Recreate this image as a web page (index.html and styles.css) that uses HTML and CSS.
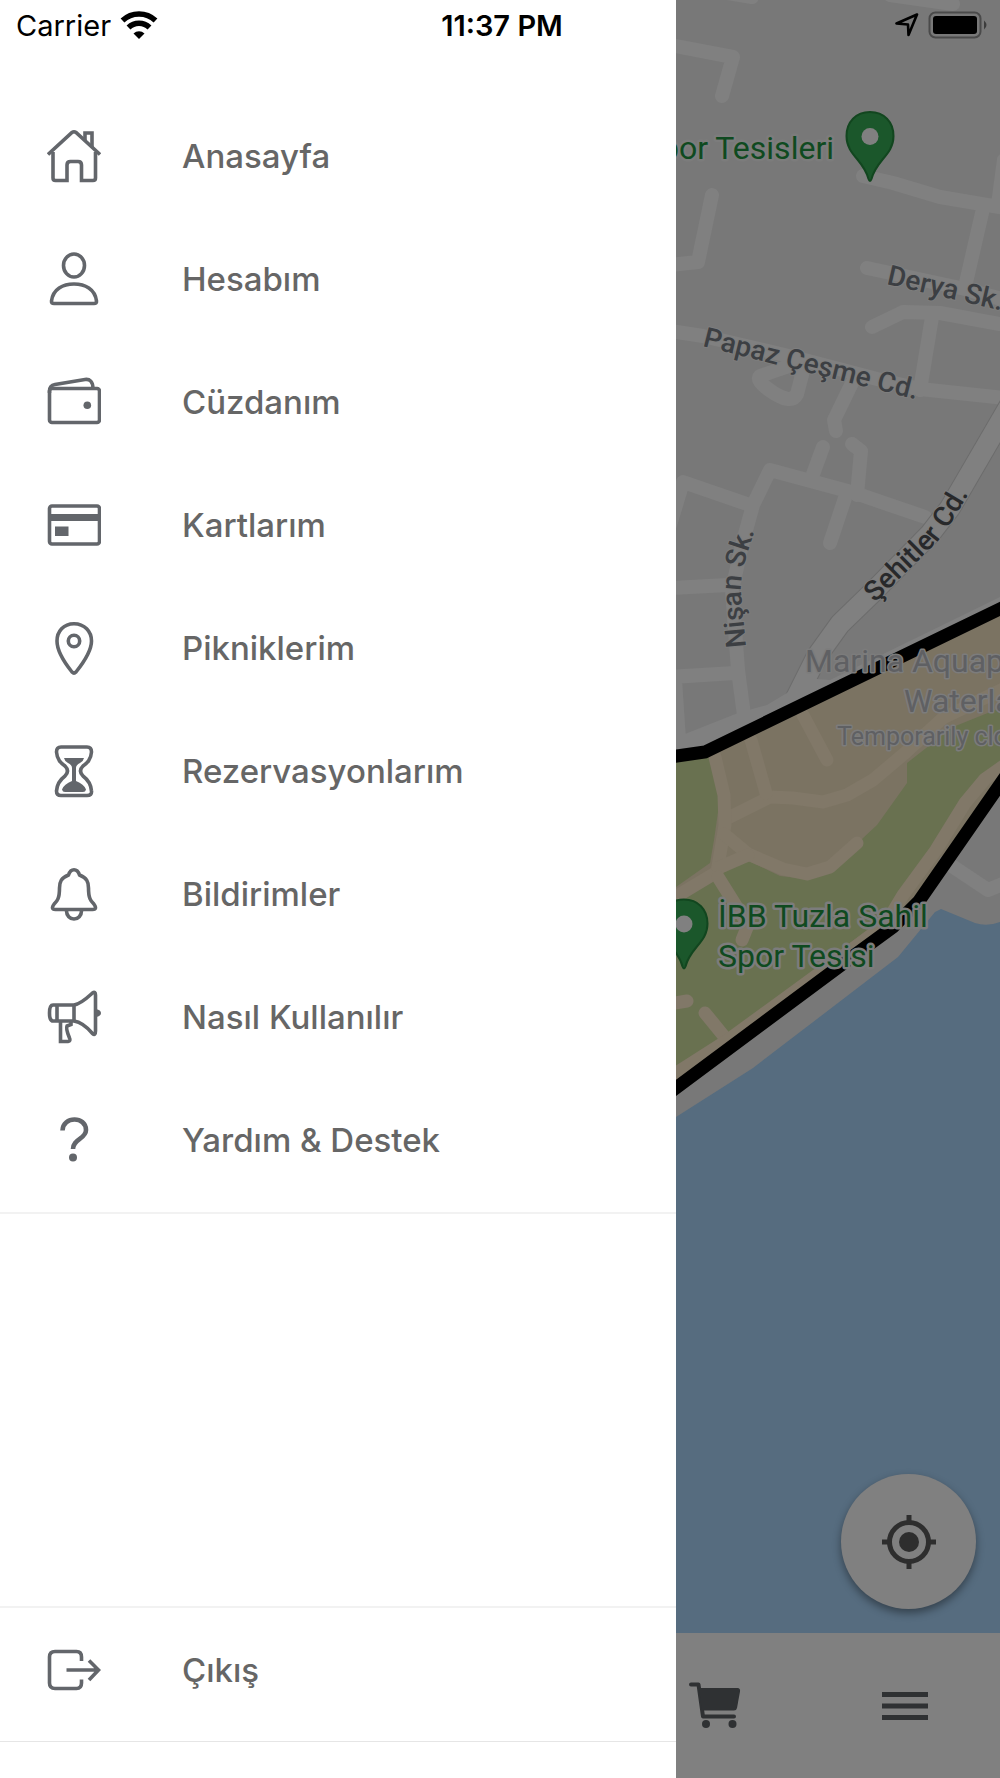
FILE: index.html
```
<!DOCTYPE html>
<html lang="tr">
<head>
    <meta charset="UTF-8">
    <meta name="viewport" content="width=device-width, initial-scale=1.0">
    <title>Menü</title>
    <link rel="stylesheet" href="styles.css">
</head>
<body>
    <div class="app">
        <header class="status-bar">
            <div class="status-left">
                <span>Carrier</span>
                <svg class="wifi" viewBox="0 0 38 28">
                    <path d="M2.5 9.5 A24 24 0 0 1 35.5 9.5" fill="none" stroke="#000" stroke-width="5.5"/>
                    <path d="M8.5 16.5 A15 15 0 0 1 29.5 16.5" fill="none" stroke="#000" stroke-width="5.5"/>
                    <path d="M19 28 L13.5 22.5 A8 8 0 0 1 24.5 22.5Z"/>
                </svg>
            </div>
            <div class="status-time">11:37 PM</div>
            <div class="status-right">
                <svg class="location" viewBox="0 0 24 24">
                    <path d="M22 1.5 L1.5 10.5 L13 11.5 L13.5 22Z" fill="none" stroke="#000" stroke-width="2.6" stroke-linejoin="round"/>
                </svg>
                <svg class="battery" viewBox="0 0 60 28">
                    <rect x="1.5" y="1.5" width="51" height="25" rx="6" fill="none" stroke="#4a4a4a" stroke-width="2"/>
                    <rect x="5" y="5" width="44" height="18" rx="3"/>
                    <path d="M56 9.5 Q61 14 56 18.5Z" fill="#3c3c3c"/>
                </svg>
            </div>
        </header>

        <aside class="drawer">
            <nav class="menu">
                <a class="menu-item" href="#">
                    <svg class="icon" viewBox="0 0 54 54">
                        <path d="M1 25.5 L25 3.5 Q27 2 29 3.5 L53 25.5"/>
                        <path d="M38 11 V4 H45 V18"/>
                        <path d="M6 23 V49 Q6 51.5 8.5 51.5 H20 V36 Q20 32.5 23.5 32.5 H31 Q34.5 32.5 34.5 36 V51.5 H46 Q48.5 51.5 48.5 49 V23"/>
                    </svg>
                    <span>Anasayfa</span>
                </a>
                <a class="menu-item" href="#">
                    <svg class="icon" viewBox="0 0 54 54">
                        <ellipse cx="27" cy="13.5" rx="10.5" ry="11.5"/>
                        <path d="M4.5 49 C6 37 16 32 27 32 S48 37 49.5 49 Q49.8 51.5 47 51.5 H7 Q4.2 51.5 4.5 49Z"/>
                    </svg>
                    <span>Hesabım</span>
                </a>
                <a class="menu-item" href="#">
                    <svg class="icon" viewBox="0 0 54 54">
                        <rect x="2.5" y="13.5" width="50" height="34" rx="2.5"/>
                        <path d="M2.5 18 V16 Q2.5 10.5 8 9.5 L38 4.5 Q45.5 3.5 46 13"/>
                        <circle class="solid" cx="40.3" cy="30.3" r="3.8"/>
                    </svg>
                    <span>Cüzdanım</span>
                </a>
                <a class="menu-item" href="#">
                    <svg class="icon" viewBox="0 0 54 54">
                        <rect x="2.5" y="8" width="50" height="38" rx="2.5"/>
                        <rect class="solid" x="2.5" y="16" width="50" height="7"/>
                        <rect class="solid" x="8" y="28.5" width="13.5" height="9.5"/>
                    </svg>
                    <span>Kartlarım</span>
                </a>
                <a class="menu-item" href="#">
                    <svg class="icon" viewBox="0 0 54 54">
                        <path d="M27 2.7 C16.5 2.7 10 10.5 10 20 C10 30 19 43.5 25 51 Q27 53 29 51 C35 43.5 44.5 30 44.5 20 C44.5 10.5 37.5 2.7 27 2.7Z"/>
                        <circle cx="27" cy="20" r="5.7"/>
                    </svg>
                    <span>Pikniklerim</span>
                </a>
                <a class="menu-item" href="#">
                    <svg class="icon" viewBox="0 0 54 54">
                        <path d="M14 3 H40 Q44.5 3 44.5 8 C44 16 40 19 36 22 Q31 27 36 32 C40 35 44 40 44.5 47 Q45 51.5 40 51.5 H14 Q9.5 51.5 9.5 47 C10 40 14 35 18 32 Q23 27 18 22 C14 19 10 16 9.5 8 Q9.5 3 14 3Z"/>
                        <path class="solid" d="M17 14 H37 Q36.5 17 33 19 Q29 21 29 24 V37 Q37 40 39 45.5 Q38.5 48 36 48 H18 Q15.5 48 15 45.5 Q17 40 25 37 V24 Q25 21 21 19 Q17.5 17 17 14Z"/>
                    </svg>
                    <span>Rezervasyonlarım</span>
                </a>
                <a class="menu-item" href="#">
                    <svg class="icon" viewBox="0 0 54 54">
                        <path d="M27 2.8 C23.5 2.8 22.5 5 21.5 8 C14 11 12.5 15 12.5 21 C12.5 32 10 34 7.5 36.5 Q3 42.5 8.5 42.5 H45.5 Q51 42.5 46.5 36.5 C44 34 41.5 32 41.5 21 C41.5 15 40 11 32.5 8 C31.5 5 30.5 2.8 27 2.8Z"/>
                        <path d="M19.5 44 A7.5 8 0 0 0 34.5 44"/>
                    </svg>
                    <span>Bildirimler</span>
                </a>
                <a class="menu-item" href="#">
                    <svg class="icon" viewBox="0 0 54 54">
                        <path d="M27 15 C34 14 40 8 45.5 3 Q48.5 1 48.5 5 V41 Q48.5 46 45.5 43.5 C40 37 34 32 27 31"/>
                        <path d="M27 15 V31 H6 Q2.5 31 2.5 23 Q2.5 15 6 15Z M10 15 V31"/>
                        <path d="M13.5 31 V51.5 H21 Q24 51 22.5 48 C20 42 19 38 20 36 L24 34.5 V31"/>
                        <path class="solid" d="M49 19 Q54 20 54 23 Q54 26 49 27Z"/>
                    </svg>
                    <span>Nasıl Kullanılır</span>
                </a>
                <a class="menu-item" href="#">
                    <svg class="icon" viewBox="0 0 54 54">
                        <path class="thick" d="M15.5 17.5 C16 3 39 3 39 17 C39 26 26 26 26 36"/>
                        <circle class="solid" cx="26" cy="44.5" r="4"/>
                    </svg>
                    <span>Yardım &amp; Destek</span>
                </a>
            </nav>
            <div class="drawer-footer">
                <a class="menu-item" href="#">
                    <svg class="icon" viewBox="0 0 54 54">
                        <path d="M34.5 18 V14 Q34.5 8.5 29.5 8.5 H8 Q2.5 8.5 2.5 14 V40 Q2.5 45.5 8 45.5 H29.5 Q34.5 45.5 34.5 40 V36.5"/>
                        <path d="M19.5 27 H51 M42 17.5 L51.5 27 L42 37"/>
                    </svg>
                    <span>Çıkış</span>
                </a>
            </div>
        </aside>

        <main class="screen">
            <div class="map">
                <svg class="map-canvas" viewBox="676 0 324 1633" preserveAspectRatio="xMinYMin slice">
                    <defs>
                        <path id="nisan" d="M746 647 L741 592 Q740 568 759 520"/>
                        <path id="sehitler" d="M875 603 L938 541 Q955 520 984 466"/>
                    </defs>

                    <!-- streets -->
                    <g class="road">
                        <path d="M715 -9 L752 -3 M890 -5 L953 4"/>
                        <path d="M670 45 L733 57 L722 96"/>
                        <path d="M712 195 L698 262 L670 265"/>
                        <path d="M863 176 L893 183 L940 197 L1005 208"/>
                        <path d="M1004 160 L998 205 M982 213 L965 287"/>
                        <path d="M867 268 L965 289 L1005 300"/>
                        <path d="M872 327 L903 312 L940 313 L1000 324"/>
                        <path d="M932 317 L920 390"/>
                        <path d="M670 331 L703 336 L793 357 L877 379 L920 389 L1005 398"/>
                        <path d="M795 366 L802 375 L797 394 Q791 406 768 389 Q756 380 760 376 L795 364"/>
                        <path d="M852 383 L834 420 L836 431"/>
                        <path d="M852 444 L861 451 L857 495"/>
                        <path d="M823 447 L812 477"/>
                        <path d="M925 517 L855 493 L770 470 L753 505 L742 545 L732 590 L738 670 L744 715"/>
                        <path d="M845 498 L830 543"/>
                        <path d="M750 505 L683 482 L670 525"/>
                        <path d="M670 588 L728 585 M670 677 L735 673 M675 680 L679 740"/>
                    </g>
                    <path class="avenue-edge" d="M1010 405 L950 508 L930 534 L873 592 L840 624 L817 656 L794 702"/>
                    <path class="avenue" d="M1010 405 L950 508 L930 534 L873 592 L840 624 L817 656 L790 710"/>
                    <path class="verge" d="M676 760 V738 L685 734 L738 713 L767 705 L787 693 L803 678 L830 680 L1000 597 V615Z"/>

                    <!-- seaside park -->
                    <path class="sand" d="M676 756 L705 752 L1000 609 V783 L917 903 L893 927 L676 1088Z"/>
                    <path class="grass" d="M676 762 L710 757 L715 767 L719 805 L714 840 L710 863 L676 887Z"/>
                    <path class="grass" d="M1000 708 L953 727 L907 763 L907 783 L877 825 L863 838 L833 872 L807 879 L780 876 L747 860 L725 872 L710 875 L676 897 V1068 L725 1036 L890 913 L913 880 L960 805 L980 776 L1000 762Z"/>
                    <g class="path">
                        <path d="M1005 688 L943 718 L905 753 L873 780 L847 795 L823 802 L793 798 L770 797 L728 818"/>
                        <path d="M715 757 L724 795 L725 825 L717 872 L672 899"/>
                        <path d="M724 834 L748 854 L783 869 L807 874 L830 867 L857 843"/>
                        <path d="M718 868 L748 855"/>
                        <path d="M718 877 L748 925 L742 940"/>
                        <path d="M751 740 L766 793 M803 715 L827 760"/>
                        <path d="M670 1004 L687 1001 M705 1013 L727 1040"/>
                        <path d="M670 1077 L728 1040 L835 962 L885 925 L903 895 L936 850 L965 803 L985 779 L1005 765"/>
                    </g>

                    <!-- shore and sea -->
                    <path class="pier" d="M946 862 L988 890 L1005 883"/>
                    <path class="sea" d="M676 1117 L753 1068 L898 957 L921 929 L935 912 L941 909 L975 923 Q987 927 1000 922 V1633 H676Z"/>
                    <path class="border" d="M670 757 L705 752 L1010 604"/>
                    <path class="border" d="M665 1096 L852 957 L893 927 L919 901 L1010 770"/>

                    <g class="street-name">
                        <text transform="translate(886 284) rotate(13)">Derya Sk.</text>
                        <text transform="translate(702 346) rotate(14)">Papaz Çeşme Cd.</text>
                        <text><textPath href="#nisan">Nişan Sk.</textPath></text>
                        <text class="major"><textPath href="#sehitler">Şehitler Cd.</textPath></text>
                    </g>

                    <g class="place closed">
                        <text x="805" y="672">Marina Aquapark</text>
                        <text x="904" y="712">Waterland</text>
                        <text class="note" x="837" y="745">Temporarily closed</text>
                    </g>
                    <g class="place">
                        <text x="834" y="159" text-anchor="end">Spor Tesisleri</text>
                        <text x="718" y="927">İBB Tuzla Sahil</text>
                        <text x="718" y="967">Spor Tesisi</text>
                    </g>

                    <g class="pin">
                        <path d="M870 112 C856 112 846.5 122 846.5 136 C846.5 155 864 160 868.5 179 Q870 183 871.5 179 C876 160 893.5 155 893.5 136 C893.5 122 884 112 870 112Z"/>
                        <circle cx="870" cy="136.5" r="8.5"/>
                    </g>
                    <g class="pin">
                        <path d="M684 899.5 C670 899.5 660.5 909.5 660.5 923.5 C660.5 942.5 678 947.5 682.5 966.5 Q684 970.5 685.5 966.5 C690 947.5 707.5 942.5 707.5 923.5 C707.5 909.5 698 899.5 684 899.5Z"/>
                        <circle cx="684" cy="924" r="8.5"/>
                    </g>
                </svg>

                <button class="locate" type="button" aria-label="Konumum">
                    <svg viewBox="0 0 54 54">
                        <path d="M27 0 V7 M27 47 V54 M0 27 H7 M47 27 H54" stroke="#2e2e2e" stroke-width="5"/>
                        <circle cx="27" cy="27" r="19.5" fill="none" stroke="#2e2e2e" stroke-width="5"/>
                        <circle cx="27" cy="27" r="10" fill="#2e2e2e"/>
                    </svg>
                </button>
            </div>

            <nav class="tab-bar">
                <button class="tab" type="button" aria-label="Sepet">
                    <svg class="cart" viewBox="0 0 52 48">
                        <path d="M2 2.5 H9.5 L14 34.5 H45" fill="none" stroke="#2f3133" stroke-width="4" stroke-linecap="round" stroke-linejoin="round"/>
                        <path d="M10 6 H48.5 Q51.5 6 51 9.5 L48 26 Q47.5 28.5 45 28.5 H13Z" fill="#2f3133"/>
                        <circle cx="17" cy="42" r="4" fill="#2f3133"/>
                        <circle cx="43.5" cy="42" r="4" fill="#2f3133"/>
                    </svg>
                </button>
                <button class="tab" type="button" aria-label="Menü">
                    <svg class="burger" viewBox="0 0 46 28">
                        <path d="M0 2.5 H46 M0 14 H46 M0 25.5 H46" stroke="#2f3133" stroke-width="5"/>
                    </svg>
                </button>
            </nav>
        </main>
    </div>
</body>
</html>
```
FILE: styles.css
```
* {
    box-sizing: border-box;
}
body {
    margin: 0;
    font-family: Inter, "Liberation Sans", sans-serif;
    background: #fff;
}
.app {
    position: relative;
    display: flex;
    min-height: 100vh;
    overflow: hidden;
}

/* status bar lies over the drawer and the map */
.status-bar {
    position: absolute;
    top: 0;
    left: 0;
    right: 0;
    z-index: 2;
    display: grid;
    grid-template-columns: 1fr auto 1fr;
    align-items: center;
    height: 50px;
    padding: 0 12px 0 16px;
    font-size: 29px;
    color: #000;
}
.status-left,
.status-right {
    display: flex;
    align-items: center;
    gap: 9px;
}
.status-right {
    justify-content: flex-end;
}
.status-time {
    font-weight: 600;
}
.wifi {
    width: 38px;
    height: 28px;
}
.location {
    width: 24px;
    height: 24px;
}
.battery {
    width: 60px;
    height: 28px;
}

/* drawer */
.drawer {
    display: flex;
    flex-direction: column;
    justify-content: space-between;
    width: 67.6%;
    padding: 94px 0 36px;
    background: #fff;
}
.menu {
    padding-bottom: 11px;
    border-bottom: 2px solid #f2f2f2;
}
.menu-item {
    display: flex;
    align-items: center;
    gap: 81px;
    height: 123px;
    padding-left: 47px;
    font-size: 33px;
    font-weight: 500;
    color: #666;
    text-decoration: none;
}
.drawer-footer {
    padding-bottom: 10px;
    border-top: 2px solid #f2f2f2;
    border-bottom: 1px solid #e6e6e6;
}
.icon {
    width: 54px;
    height: 54px;
    fill: none;
    stroke: #63666b;
    stroke-width: 3.6;
}
.icon .solid {
    fill: #63666b;
    stroke: none;
}
.icon .thick {
    stroke-width: 4.6;
}

/* dimmed screen behind the drawer */
.screen {
    display: flex;
    flex: 1;
    flex-direction: column;
    min-width: 0;
    background: #808080;
}
.map {
    position: relative;
    display: flex;
    flex: 1;
    background: #787878;
}
.map-canvas {
    flex: 1;
    width: 100%;
}
.road,
.path,
.pier {
    fill: none;
    stroke: #808080;
    stroke-width: 14;
    stroke-linecap: round;
    stroke-linejoin: round;
}
.path {
    stroke: #817868;
    stroke-width: 13;
}
.avenue,
.avenue-edge {
    fill: none;
    stroke: #808080;
    stroke-width: 20;
    stroke-linejoin: round;
}
.avenue-edge {
    stroke: #6c6c6c;
    stroke-width: 22;
}
.verge {
    fill: #808080;
}
.sand {
    fill: #7b7362;
}
.grass {
    fill: #697150;
}
.sea {
    fill: #566c7f;
}
.border {
    fill: none;
    stroke: #000;
    stroke-width: 13;
}
.street-name,
.place {
    font-family: Roboto, "Liberation Sans", sans-serif;
    paint-order: stroke;
    stroke-linejoin: round;
}
.street-name {
    font-size: 28px;
    font-weight: 500;
    fill: #3c3f43;
    stroke: #7e7e7e;
    stroke-width: 2;
}
.street-name .major {
    fill: #28292b;
}
.place {
    font-size: 32px;
    fill: #0f4a20;
    stroke: #7c7c7c;
    stroke-width: 5;
}
.closed {
    fill: #5f6063;
    stroke-width: 3;
}
.closed .note {
    font-size: 25px;
}
.pin path {
    fill: #1b572b;
    stroke: #12461f;
    stroke-width: 2;
}
.pin circle {
    fill: #808080;
}
.locate {
    position: absolute;
    right: 24px;
    bottom: 24px;
    display: flex;
    align-items: center;
    justify-content: center;
    width: 135px;
    height: 135px;
    padding: 0;
    border: none;
    border-radius: 50%;
    background: #808080;
    box-shadow: 0 4px 8px rgba(0, 0, 0, 0.4);
    cursor: pointer;
}
.locate svg {
    width: 54px;
    height: 54px;
}
.tab-bar {
    display: flex;
    align-items: center;
    justify-content: space-between;
    height: 145px;
    padding: 0 72px 0 13px;
}
.tab {
    display: flex;
    padding: 0;
    border: none;
    background: none;
    cursor: pointer;
}
.cart {
    width: 52px;
    height: 48px;
}
.burger {
    width: 46px;
    height: 28px;
}
```
